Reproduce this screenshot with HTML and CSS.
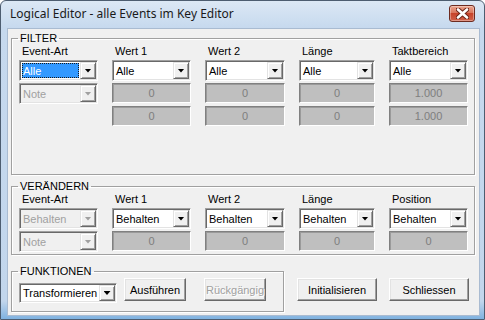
FILE: index.html
```html
<!DOCTYPE html>
<html lang="de">
<head>
    <meta charset="UTF-8">
    <title>Logical Editor</title>
    <link rel="stylesheet" href="styles.css">
</head>
<body>
    <div class="window">
        <div class="titlebar">
            <span class="title">Logical Editor - alle Events im Key Editor</span>
            <div class="close">
                <svg width="13" height="11" viewBox="0 0 13 11">
                    <path d="M2 1.5 L11 9.5 M11 1.5 L2 9.5" stroke="#6b2418" stroke-width="4.6" stroke-linecap="round"/>
                    <path d="M2 1.5 L11 9.5 M11 1.5 L2 9.5" stroke="#fff" stroke-width="2.6" stroke-linecap="round"/>
                </svg>
            </div>
        </div>
        <div class="client">
            <fieldset class="group filter">
                <legend>FILTER</legend>
                <div class="grid">
                    <div class="label">Event-Art</div>
                    <div class="label">Wert 1</div>
                    <div class="label">Wert 2</div>
                    <div class="label">Länge</div>
                    <div class="label">Taktbereich</div>

                    <div class="combo focused"><span class="value"><span>Alle</span></span><span class="arrow"></span></div>
                    <div class="combo"><span class="value">Alle</span><span class="arrow"></span></div>
                    <div class="combo"><span class="value">Alle</span><span class="arrow"></span></div>
                    <div class="combo"><span class="value">Alle</span><span class="arrow"></span></div>
                    <div class="combo"><span class="value">Alle</span><span class="arrow"></span></div>

                    <div class="combo disabled"><span class="value">Note</span><span class="arrow"></span></div>
                    <div class="field">0</div>
                    <div class="field">0</div>
                    <div class="field">0</div>
                    <div class="field">1.000</div>

                    <div></div>
                    <div class="field">0</div>
                    <div class="field">0</div>
                    <div class="field">0</div>
                    <div class="field">1.000</div>
                </div>
            </fieldset>

            <fieldset class="group change">
                <legend>VERÄNDERN</legend>
                <div class="grid">
                    <div class="label">Event-Art</div>
                    <div class="label">Wert 1</div>
                    <div class="label">Wert 2</div>
                    <div class="label">Länge</div>
                    <div class="label">Position</div>

                    <div class="combo disabled"><span class="value">Behalten</span><span class="arrow"></span></div>
                    <div class="combo"><span class="value">Behalten</span><span class="arrow"></span></div>
                    <div class="combo"><span class="value">Behalten</span><span class="arrow"></span></div>
                    <div class="combo"><span class="value">Behalten</span><span class="arrow"></span></div>
                    <div class="combo"><span class="value">Behalten</span><span class="arrow"></span></div>

                    <div class="combo disabled"><span class="value">Note</span><span class="arrow"></span></div>
                    <div class="field">0</div>
                    <div class="field">0</div>
                    <div class="field">0</div>
                    <div class="field">0</div>
                </div>
            </fieldset>

            <div class="actions">
                <fieldset class="group funcs">
                    <legend>FUNKTIONEN</legend>
                    <div class="combo func-combo"><span class="value">Transformieren</span><span class="arrow"></span></div>
                    <button class="btn run">Ausführen</button>
                    <button class="btn undo" disabled>Rückgängig</button>
                </fieldset>
                <button class="btn init">Initialisieren</button>
                <button class="btn quit">Schliessen</button>
            </div>
        </div>
    </div>
</body>
</html>
```

FILE: styles.css
```css
* {
    box-sizing: border-box;
}
body {
    margin: 0;
    font-family: "Liberation Sans", Arial, sans-serif;
    font-size: 11px;
    color: #000;
    background: #fff;
}
.window {
    width: 485px;
    height: 320px;
    border: 1px solid #4d5d70;
    border-radius: 6px 6px 0 0;
    background: linear-gradient(#dce8f5, #c6d9ee 27px, #c2d6ec 300px, #7fb2e0);
    display: flex;
    flex-direction: column;
    padding: 0 4px 3px 6px;
}
.titlebar {
    height: 27px;
    display: flex;
    justify-content: space-between;
    padding-left: 3px;
}
.title {
    font-family: "Noto Sans", sans-serif;
    font-size: 12px;
    color: #1a1a1a;
    line-height: 26px;
}
.close {
    width: 26px;
    height: 17px;
    margin: 4px 5px 0 0;
    border: 1px solid #6d2b20;
    border-radius: 3px;
    background: linear-gradient(#eba58f, #d9765d 45%, #c7432a 50%, #d0614a);
    box-shadow: inset 0 0 0 1px rgba(255, 255, 255, 0.35);
    display: flex;
    align-items: center;
    justify-content: center;
}
.client {
    flex: 1;
    background: #f0f0f0;
    border: 1px solid #a9bbd1;
    padding-top: 2px;
}
.group {
    border: 1px solid #a0a0a0;
    box-shadow: 1px 1px 0 #fff, inset 1px 1px 0 #fff;
    margin: 0 4px 0 3px;
    padding: 0 0 0 7px;
    min-width: 0;
}
.group legend {
    padding: 0 2px;
    margin-left: -1px;
    line-height: 14px;
}
.filter {
    padding-bottom: 48px;
}
.change {
    margin-top: 4px;
    padding-bottom: 2px;
}
.grid {
    display: grid;
    grid-template-columns: 79px 79px 80px 76px 79px;
    column-gap: 14px;
    row-gap: 2px;
    align-items: start;
}
.label {
    line-height: 13px;
    padding-left: 3px;
}
.combo {
    display: flex;
    height: 21px;
    background: #fff;
    border: 1px solid;
    border-color: #a0a0a0 #fff #fff #a0a0a0;
    box-shadow: inset 1px 1px 0 #696969, inset -1px -1px 0 #e3e3e3;
    padding: 1px;
}
.value {
    flex: 1;
    display: flex;
    align-items: center;
    padding-left: 2px;
    white-space: nowrap;
    overflow: hidden;
}
.focused .value {
    padding: 1px;
}
.focused .value span {
    flex: 1;
    align-self: stretch;
    display: flex;
    align-items: center;
    padding-left: 1px;
    background: #3399ff;
    color: #fff;
    outline: 1px dotted #1a1a1a;
    outline-offset: -1px;
}
.arrow {
    width: 16px;
    background: #f0f0f0;
    border: 1px solid;
    border-color: #e3e3e3 #696969 #696969 #e3e3e3;
    box-shadow: inset 1px 1px 0 #fff, inset -1px -1px 0 #a0a0a0;
    display: flex;
    align-items: center;
    justify-content: center;
}
.arrow::before {
    content: "";
    width: 7px;
    height: 4px;
    background: #000;
    clip-path: polygon(0 0, 100% 0, 50% 100%);
}
.disabled {
    background: #f0f0f0;
    color: #a0a0a0;
}
.disabled .arrow::before {
    background: #a0a0a0;
}
.field {
    height: 20px;
    background: #bfbfbf;
    border: 1px solid;
    border-color: #808080 #fff #fff #808080;
    box-shadow: inset 1px 1px 0 #9a9a9a;
    color: #7e7e7e;
    text-align: center;
    line-height: 18px;
}
.actions {
    display: flex;
    align-items: flex-start;
    margin-top: 9px;
}
.funcs {
    width: 273px;
    margin-right: 0;
    padding-bottom: 8px;
    display: flex;
    align-items: flex-start;
}
.func-combo {
    width: 98px;
    height: 20px;
    margin-top: 5px;
}
.btn {
    height: 23px;
    padding: 0;
    font: inherit;
    color: #000;
    background: #f0f0f0;
    border: 1px solid;
    border-color: #fff #696969 #696969 #fff;
    box-shadow: inset -1px -1px 0 #a0a0a0, inset 1px 1px 0 #e3e3e3;
}
.btn:disabled {
    color: #a0a0a0;
    text-shadow: 1px 1px 0 #fff;
}
.run {
    width: 62px;
    margin-left: 7px;
}
.undo {
    width: 62px;
    margin-left: 18px;
}
.init {
    width: 80px;
    margin: 14px 0 0 13px;
}
.quit {
    width: 80px;
    margin: 14px 0 0 12px;
}
```
